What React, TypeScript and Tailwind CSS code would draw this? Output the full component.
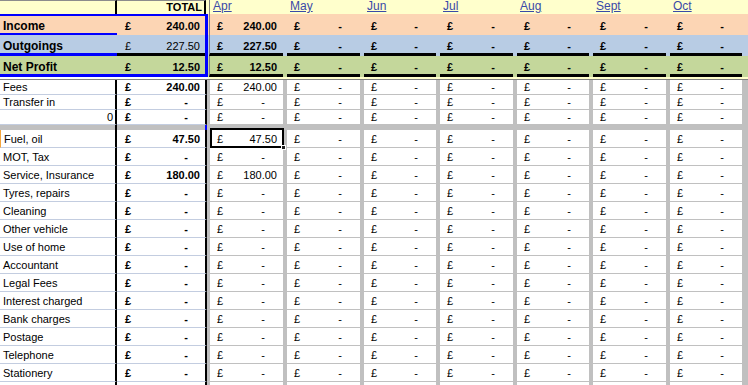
import React from 'react';

const MONTHS = ['May', 'Jun', 'Jul', 'Aug', 'Sept', 'Oct'];
// alternating widths so the grey separators land where the sheet has them
const MW = ['w-[73px]', 'w-[72px]', 'w-[73px]', 'w-[72px]', 'w-[73px]', 'w-[72px]'];

type Kind = 'income' | 'out' | 'np';

const TOP: Record<Kind, { bg: string; box: string; a: string; b: string; m: string }> = {
  income: {
    bg: 'bg-[#fcd5b4]',
    box: 'border-t-2 border-r-[3px] border-[#0000ff]',
    a: 'border-b-2 border-[#0000ff]',
    b: 'pb-[2px]',
    m: 'pb-[2px]',
  },
  out: {
    bg: 'bg-[#b8cce4]',
    box: 'border-r-[3px] border-[#0000ff]',
    a: 'border-b-[3px] border-[#0000ff]',
    b: 'border-b-[3px] border-black',
    m: 'border-b-[3px] border-black',
  },
  np: {
    bg: 'bg-[#c4d79b]',
    box: 'border-r-[3px] border-b-[3px] border-[#0000ff]',
    a: '',
    b: '',
    m: 'border-b-[3px] border-black',
  },
};

// accounting style cell: pound sign on the left, amount or dash on the right
const Acct = ({ v, bold, total }: { v?: string; bold?: boolean; total?: boolean }) => {
  const dash = !v;
  let pad = '';
  if (total) pad = dash ? 'pl-[8px] pr-[17px]' : 'pl-[8px] pr-[5px]';
  else pad = dash ? 'pl-[7px] pr-[18px]' : 'pl-[7px] pr-[6px]';
  return (
    <div className={`flex w-full justify-between ${pad} ${bold ? 'font-bold' : ''}`}>
      <span>£</span>
      <span>{dash ? '-' : v}</span>
    </div>
  );
};

const HeaderRow = () => (
  <div className="flex h-[14px] bg-[#ffffcc] leading-[12px]">
    <div className="w-[117px] shrink-0 border-t border-r-2 border-t-[#8c8c8c] border-r-black" />
    <div className="w-[89px] shrink-0 border-t border-r-2 border-t-[#8c8c8c] border-r-black pr-[2px] text-right font-bold">
      TOTAL
    </div>
    <div className="w-[3px] shrink-0" />
    <div className="w-[74px] shrink-0 border-l border-l-[#808080] pl-[3px] text-[12px]">
      <span className="text-[#3a4aa8] underline">Apr</span>
    </div>
    {MONTHS.map((m, i) => (
      <React.Fragment key={m}>
        <div className="w-[4px] shrink-0" />
        <div className={`${MW[i]} shrink-0 pl-[3px] text-[12px]`}>
          <span className="text-[#3a4aa8] underline">{m}</span>
        </div>
      </React.Fragment>
    ))}
    <div className="flex-1" />
  </div>
);

const TopRow = ({ kind, label, total, totalBold, apr }: { kind: Kind; label: string; total: string; totalBold: boolean; apr: string }) => {
  const t = TOP[kind];
  return (
    <div className={`flex h-[21px] ${t.bg}`}>
      <div className={`flex w-[208px] shrink-0 ${t.box}`}>
        <div className={`flex w-[117px] shrink-0 items-end pl-[3px] text-[12px] leading-[14px] font-bold ${t.a}`}>{label}</div>
        <div className={`flex flex-1 items-end ${t.b}`}>
          <Acct v={total} bold={totalBold} total />
        </div>
      </div>
      <div className="w-[1px] shrink-0" />
      <div className={`flex w-[74px] shrink-0 items-end border-l border-l-[#808080] ${t.m}`}>
        <Acct v={apr} bold />
      </div>
      {MONTHS.map((m, i) => (
        <React.Fragment key={m}>
          <div className="w-[4px] shrink-0" />
          <div className={`flex ${MW[i]} shrink-0 items-end ${t.m}`}>
            <Acct bold />
          </div>
        </React.Fragment>
      ))}
      <div className="flex-1" />
    </div>
  );
};

interface LineRow {
  label: string;
  right?: boolean;
  total?: string;
  apr?: string;
  sel?: boolean;
  blank?: boolean;
}

const DataRow = ({ row, tall }: { row: LineRow; tall?: boolean }) => {
  const h = tall ? 'h-[18px]' : 'h-[15px]';
  const pb = tall ? 'pb-[1px]' : 'pb-0';
  return (
    <div className={`flex ${h}`}>
      <div
        className={`flex w-[117px] shrink-0 items-end border-r-2 border-b border-r-black border-b-[#c3cde0] ${pb} ${
          row.right ? 'justify-end pr-[2px]' : 'pl-[3px]'
        } ${row.sel ? 'border-l border-l-[#f4a43c]' : ''}`}
      >
        {row.label}
      </div>
      <div className={`flex w-[90px] shrink-0 items-end border-r-2 border-b border-r-black border-b-[#c3cde0] ${pb}`}>
        {!row.blank && <Acct v={row.total} bold total />}
      </div>
      <div className="w-[3px] shrink-0 bg-[#c0c0c0]" />
      <div className={`relative flex w-[73px] shrink-0 items-end border-b border-[#c0c0c0] ${pb}`}>
        {!row.blank && <Acct v={row.apr} />}
        {row.sel && (
          <>
            <div className="absolute -top-[2px] left-0 -right-[1px] -bottom-[1px] border-2 border-black" />
            <div className="absolute -right-[3px] -bottom-[3px] h-[5px] w-[5px] border border-white bg-[#222]" />
          </>
        )}
      </div>
      {MONTHS.map((m, i) => (
        <React.Fragment key={m}>
          <div className="w-[4px] shrink-0 bg-[#c0c0c0]" />
          <div className={`flex ${MW[i]} shrink-0 items-end border-b border-[#c0c0c0] ${pb}`}>
            {!row.blank && <Acct />}
          </div>
        </React.Fragment>
      ))}
      <div className="flex-1 bg-[#c0c0c0]" />
    </div>
  );
};

const upper: LineRow[] = [
  { label: 'Fees', total: '240.00', apr: '240.00' },
  { label: 'Transfer in' },
  { label: '0', right: true },
];

const lower: LineRow[] = [
  { label: 'Fuel, oil', total: '47.50', apr: '47.50', sel: true },
  { label: 'MOT, Tax' },
  { label: 'Service, Insurance', total: '180.00', apr: '180.00' },
  { label: 'Tyres, repairs' },
  { label: 'Cleaning' },
  { label: 'Other vehicle' },
  { label: 'Use of home' },
  { label: 'Accountant' },
  { label: 'Legal Fees' },
  { label: 'Interest charged' },
  { label: 'Bank charges' },
  { label: 'Postage' },
  { label: 'Telephone' },
  { label: 'Stationery' },
  { label: '', blank: true },
];

const App = () => {
  return (
    <div className="h-[385px] w-[748px] overflow-hidden bg-white font-['Liberation_Sans',Arial,sans-serif] text-[11px] leading-[13px] text-black">
      <HeaderRow />
      <TopRow kind="income" label="Income" total="240.00" totalBold apr="240.00" />
      <TopRow kind="out" label="Outgoings" total="227.50" totalBold={false} apr="227.50" />
      <TopRow kind="np" label="Net Profit" total="12.50" totalBold apr="12.50" />

      {/* strip under the summary block */}
      <div className="flex h-[2px]">
        <div className="w-[208px] shrink-0 bg-white" />
        <div className="flex-1 bg-[#ffffcc]" />
      </div>
      <div className="h-px bg-[#808080]" />

      {upper.map((r) => (
        <DataRow key={r.label} row={r} />
      ))}

      {/* grey spacer row */}
      <div className="flex h-[5px] bg-[#c0c0c0]">
        <div className="w-[117px] shrink-0 border-r-2 border-r-black" />
        <div className="w-[90px] shrink-0 border-r-2 border-r-[#0000ff]" />
      </div>

      {lower.map((r, i) => (
        <DataRow key={r.label + i} row={r} tall />
      ))}
    </div>
  );
};

export default App;
